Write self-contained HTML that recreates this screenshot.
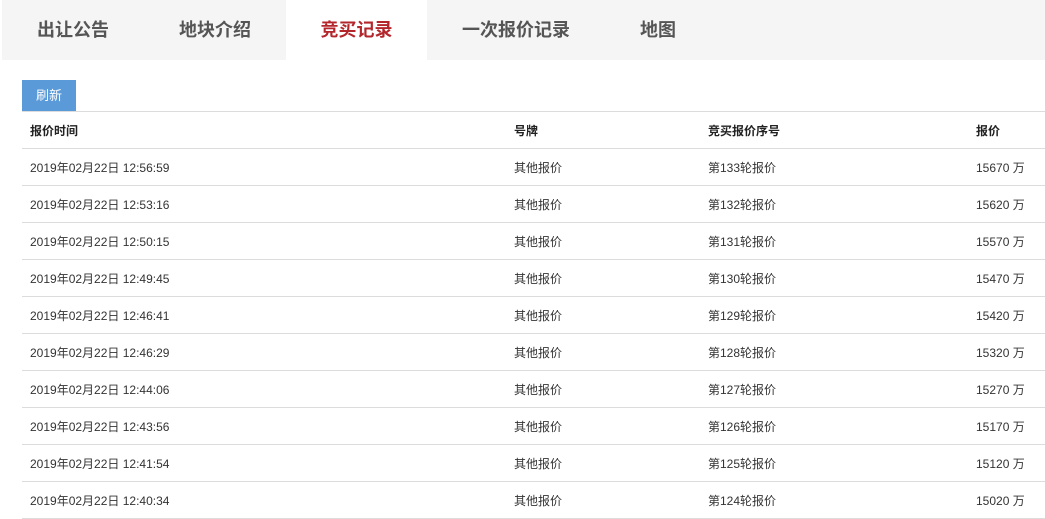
<!DOCTYPE html>
<html><head><meta charset="utf-8"><style>
*{margin:0;padding:0;box-sizing:border-box}
body{width:1045px;height:518px;background:#fff;font-family:"Liberation Sans","Noto Sans CJK SC",sans-serif;position:relative;overflow:hidden;color:#333}
.bar{position:absolute;left:2px;top:0;width:1043px;height:60px;background:#f5f5f5}
.tab{position:absolute;top:0;height:60px;line-height:60px;font-size:18px;font-weight:bold;color:#555;text-align:center}
.act{background:#fff;color:#b3272c}
.btn{position:absolute;left:22px;top:80px;width:54px;height:31px;background:#5b9ad9;color:#fff;font-size:13px;line-height:31px;text-align:center}
.line{position:absolute;left:22px;width:1023px;height:1px;background:#dcdcdc}
.c{position:absolute;font-size:12px;line-height:14px;color:#333}
.h{font-weight:bold;color:#222}
</style></head><body>
<div class="bar"></div>
<div class="tab" style="left:2px;width:142px">出让公告</div>
<div class="tab" style="left:144px;width:142px">地块介绍</div>
<div class="tab act" style="left:286px;width:141px">竞买记录</div>
<div class="tab" style="left:436px;width:160px">一次报价记录</div>
<div class="tab" style="left:610px;width:96px">地图</div>
<div class="btn">刷新</div>
<div class="line" style="top:111px"></div>
<div class="c h" style="left:30px;top:124px">报价时间</div>
<div class="c h" style="left:514px;top:124px">号牌</div>
<div class="c h" style="left:708px;top:124px">竞买报价序号</div>
<div class="c h" style="left:976px;top:124px">报价</div>
<div id="rows"></div>
<script>
var d=[["12:56:59",133,15670],["12:53:16",132,15620],["12:50:15",131,15570],["12:49:45",130,15470],["12:46:41",129,15420],["12:46:29",128,15320],["12:44:06",127,15270],["12:43:56",126,15170],["12:41:54",125,15120],["12:40:34",124,15020]];
var h="";
for(var i=0;i<d.length;i++){var y=148+i*37;
h+='<div class="line" style="top:'+y+'px"></div>';
var t=y+13;
h+='<div class="c" style="left:30px;top:'+t+'px">2019年02月22日 '+d[i][0]+'</div>';
h+='<div class="c" style="left:514px;top:'+t+'px">其他报价</div>';
h+='<div class="c" style="left:708px;top:'+t+'px">第'+d[i][1]+'轮报价</div>';
h+='<div class="c" style="left:976px;top:'+t+'px">'+d[i][2]+' 万</div>';}
h+='<div class="line" style="top:518px"></div>';
document.getElementById("rows").innerHTML=h;
</script>
</body></html>
